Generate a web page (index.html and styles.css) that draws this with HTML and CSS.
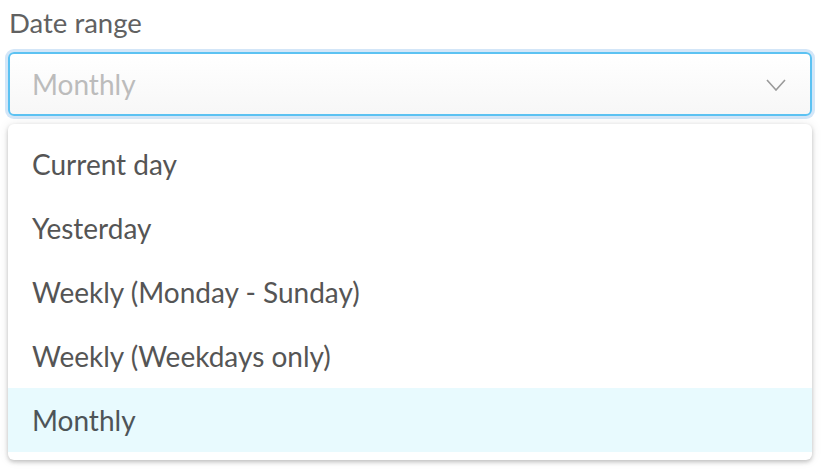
FILE: index.html
```html
<!DOCTYPE html>
<html>
<head>
<meta charset="utf-8">
<link rel="stylesheet" href="styles.css">
</head>
<body>
<div class="field">
  <div class="label">Date range</div>
  <div class="select">
    <span class="placeholder">Monthly</span>
    <svg class="chevron" width="20" height="12" viewBox="0 0 20 12"><path d="M1 1 L10 11 L19 1" fill="none" stroke="#9a9a9a" stroke-width="1.6"/></svg>
  </div>
  <ul class="menu">
    <li class="item">Current day</li>
    <li class="item">Yesterday</li>
    <li class="item">Weekly (Monday - Sunday)</li>
    <li class="item">Weekly (Weekdays only)</li>
    <li class="item active">Monthly</li>
  </ul>
</div>
</body>
</html>
```
FILE: styles.css
```css
html, body {
  margin: 0;
  padding: 0;
  background: #ffffff;
}
body {
  font-family: Lato, "Liberation Sans", sans-serif;
  width: 824px;
  height: 472px;
  overflow: hidden;
}
.field {
  padding: 4px 12px 0 8px;
  display: flex;
  flex-direction: column;
}
.label {
  font-size: 27.5px;
  line-height: 38px;
  color: #616161;
  padding-left: 1px;
  margin-bottom: 10px;
}
.select {
  height: 60px;
  border: 2px solid #5cc2f2;
  border-radius: 6px;
  box-shadow: 0 0 0 3px #d3e6f8;
  background: linear-gradient(#ffffff, #f7f7f7);
  display: flex;
  align-items: center;
  justify-content: space-between;
  padding: 0 24px 0 22px;
}
.placeholder {
  font-size: 28px;
  color: #bcbcbc;
}
.chevron {
  margin-top: 2px;
}
.menu {
  list-style: none;
  margin: 8px 0 0 0;
  padding: 8px 0;
  background: #ffffff;
  border-radius: 6px;
  box-shadow: 0 2px 4px rgba(0,0,0,0.22), 0 0 12px rgba(0,0,0,0.08);
}
.item {
  height: 64px;
  display: flex;
  align-items: center;
  padding-left: 24px;
  font-size: 28px;
  color: #555555;
}
.item.active {
  background: #e8fafe;
  color: #4e5458;
}
```
